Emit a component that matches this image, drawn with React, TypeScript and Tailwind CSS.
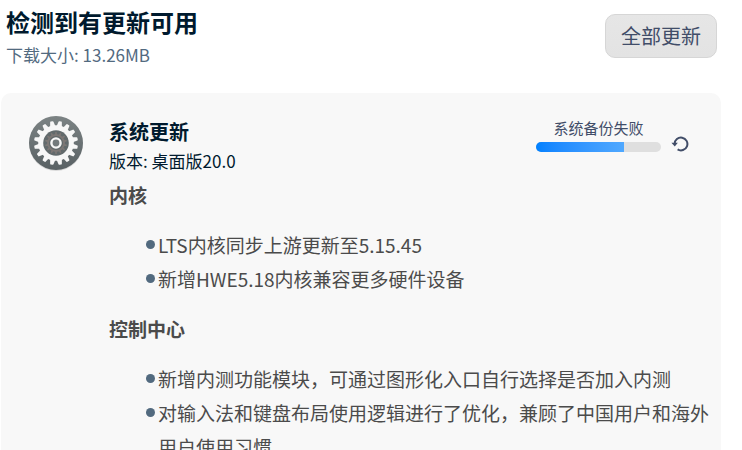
import { useState } from "react";

const UPDATE_LOG = [
  {
    title: "内核",
    items: ["LTS内核同步上游更新至5.15.45", "新增HWE5.18内核兼容更多硬件设备"],
  },
  {
    title: "控制中心",
    items: [
      "新增内测功能模块，可通过图形化入口自行选择是否加入内测",
      "对输入法和键盘布局使用逻辑进行了优化，兼顾了中国用户和海外用户使用习惯",
    ],
  },
];

const TEETH = Array.from({ length: 16 }, (_, i) => 11.25 + i * 22.5);
const SMALL_TEETH = Array.from({ length: 14 }, (_, i) => (i * 360) / 14);

function GearIcon() {
  return (
    <svg viewBox="0 0 56 58" className="h-[58px] w-14 shrink-0" aria-hidden>
      <defs>
        <linearGradient id="gear-bg" x1="0" y1="0" x2="0" y2="1">
          <stop offset="0" stopColor="#7c8384" />
          <stop offset="1" stopColor="#596164" />
        </linearGradient>
      </defs>
      <circle cx="28" cy="29" r="27" fill="#000" opacity="0.12" />
      <circle cx="28" cy="28" r="27" fill="url(#gear-bg)" />
      <g fill="#f7f7f7">
        <circle cx="28" cy="28" r="17.8" />
        {TEETH.map((angle) => (
          <path
            key={angle}
            d="M25.2 12 L26.3 6.6 Q26.4 6 27 6 H29 Q29.6 6 29.7 6.6 L30.8 12 Z"
            transform={`rotate(${angle} 28 28)`}
          />
        ))}
      </g>
      <circle cx="28" cy="28" r="12.8" fill="#626a6c" />
      <g fill="#7d7876">
        <circle cx="28" cy="28" r="9" />
        {SMALL_TEETH.map((angle) => (
          <path key={angle} d="M27 20 L27.3 17 H28.7 L29 20 Z" transform={`rotate(${angle} 28 28)`} />
        ))}
      </g>
      <circle cx="28" cy="28" r="7" fill="#5f6769" />
      <circle cx="28" cy="28" r="4.6" fill="#737a7c" stroke="#f7f7f7" strokeWidth="2.4" />
    </svg>
  );
}

function RetryIcon() {
  return (
    <svg viewBox="0 0 18 18" className="h-[18px] w-[18px]" aria-hidden>
      <path d="M3.6 9 A6.4 6.4 0 1 1 6.6 14.4" fill="none" stroke="#414d68" strokeWidth="2" />
      <path d="M0.4 7.8 H6.8 L3.8 11.6 Z" fill="#414d68" />
    </svg>
  );
}

function BackupStatus() {
  const [progress] = useState(70);

  return (
    <div className="flex items-center gap-2.5">
      <div className="flex w-[125px] flex-col gap-1">
        <p id="backup-status" className="text-center text-[15px] leading-5 text-[#414d68]">
          系统备份失败
        </p>
        <div
          role="progressbar"
          aria-labelledby="backup-status"
          aria-valuenow={progress}
          className="h-2.5 overflow-hidden rounded-full bg-[#dfdfdf]"
        >
          <div
            className="h-full bg-linear-to-r from-[#0081ff] to-[#4fa8ff]"
            style={{ width: `${progress}%` }}
          />
        </div>
      </div>
      <button type="button" aria-label="重试" className="mt-[18px] cursor-pointer">
        <RetryIcon />
      </button>
    </div>
  );
}

export default function App() {
  return (
    <main className="flex h-screen flex-col overflow-hidden bg-white pr-[21px] pl-px font-['Noto_Sans_CJK_SC',sans-serif]">
      <header className="flex shrink-0 items-start justify-between pt-1 pr-1 pb-6 pl-[5px]">
        <div>
          <h1 className="text-2xl leading-9 font-bold text-[#001a2e]">检测到有更新可用</h1>
          <p className="text-[17px] leading-[29px] text-[#526a7f]">下载大小: 13.26MB</p>
        </div>
        <button
          type="button"
          className="mt-2.5 cursor-pointer rounded-[10px] border border-[#d6d6d6] bg-linear-to-b from-[#e6e6e6] to-[#e3e3e3] px-[15px] py-1.5 text-xl leading-[30px] text-[#414d68]"
        >
          全部更新
        </button>
      </header>

      <section className="flex grow items-start gap-[25px] rounded-t-[10px] bg-[#f8f8f8] pt-[22px] pr-2.5 pl-[27px]">
        <GearIcon />
        <div className="min-w-0 flex-1">
          <div className="flex items-start justify-between pt-0.5 pr-[22px]">
            <div>
              <h2 className="text-xl leading-[30px] font-bold text-[#001a2e]">系统更新</h2>
              <p className="text-[17px] leading-7 text-[#001a2e]">版本: 桌面版20.0</p>
            </div>
            <BackupStatus />
          </div>

          <div className="pt-[3px] text-[19px] leading-[34px] text-[#4b4b4b]">
            {UPDATE_LOG.map((group) => (
              <div key={group.title} className="mb-4">
                <h3 className="mb-4 font-bold">{group.title}</h3>
                <ul className="pl-[37px]">
                  {group.items.map((item) => (
                    <li key={item} className="flex items-start gap-[3px]">
                      <span className="mt-3 h-[9px] w-[9px] shrink-0 rounded-full bg-[#526a7f]" />
                      <span>{item}</span>
                    </li>
                  ))}
                </ul>
              </div>
            ))}
          </div>
        </div>
      </section>
    </main>
  );
}
